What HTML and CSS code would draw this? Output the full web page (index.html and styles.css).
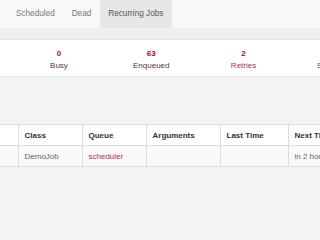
FILE: index.html
```html
<!DOCTYPE html>
<html>
<head>
<meta charset="utf-8">
<link rel="stylesheet" href="styles.css">
</head>
<body>
<nav class="navbar">
  <a class="tab">Scheduled</a>
  <a class="tab">Dead</a>
  <a class="tab active">Recurring Jobs</a>
</nav>
<div class="band"></div>
<section class="summary">
  <div class="stat"><div class="count">0</div><div class="desc">Busy</div></div>
  <div class="stat"><div class="count">63</div><div class="desc">Enqueued</div></div>
  <div class="stat"><div class="count">2</div><div class="desc link">Retries</div></div>
  <div class="stat"><div class="count">0</div><div class="desc">Scheduled</div></div>
</section>
<main class="content">
  <table class="jobs">
    <colgroup>
      <col class="c-name"><col class="c-class"><col class="c-queue"><col class="c-args"><col class="c-last"><col class="c-next">
    </colgroup>
    <thead>
      <tr><th></th><th>Class</th><th>Queue</th><th>Arguments</th><th>Last Time</th><th>Next Time</th></tr>
    </thead>
    <tbody>
      <tr><td></td><td>DemoJob</td><td><a class="queue">scheduler</a></td><td></td><td></td><td>in 2 hours</td></tr>
    </tbody>
  </table>
</main>
</body>
</html>
```
FILE: styles.css
```css
html, body {
  margin: 0;
  padding: 0;
}
body {
  width: 320px;
  height: 214px;
  overflow: hidden;
  background: #f3f3f3;
  font-family: "Liberation Sans", Arial, Helvetica, sans-serif;
  font-size: 8px;
  color: #555;
}
.navbar {
  display: flex;
  height: 28px;
  background: #f8f8f8;
  padding-left: 7.5px;
}
.tab {
  display: block;
  padding: 0 8.5px;
  line-height: 28px;
  font-size: 8.2px;
  color: #777;
  white-space: nowrap;
}
.tab.active {
  background: #e7e7e7;
  color: #555;
}
.band {
  height: 11px;
  background: #efefef;
  border-bottom: 1px solid #e4e4e4;
}
.summary {
  display: flex;
  height: 37px;
  box-sizing: border-box;
  padding: 7.5px 0 0 12.8px;
  background: #fff;
  border-bottom: 1px solid #e6e6e6;
  white-space: nowrap;
}
.stat {
  flex: 0 0 92.3px;
  text-align: center;
}
.count {
  line-height: 12px;
  font-weight: bold;
  color: #b1003e;
}
.desc {
  line-height: 12px;
  color: #5a3344;
}
.desc.link {
  color: #b42a5a;
}
.content {
  margin-top: 47px;
}
.jobs {
  border-collapse: collapse;
  table-layout: fixed;
  width: 400px;
  margin-left: -1px;
  background: #fff;
}
.c-name { width: 19px; }
.c-class { width: 64px; }
.c-queue { width: 64px; }
.c-args { width: 74px; }
.c-last { width: 68px; }
.c-next { width: 111px; }
.jobs th, .jobs td {
  border: 1px solid #ddd;
  height: 21px;
  padding: 0 5.5px;
  text-align: left;
  white-space: nowrap;
  overflow: hidden;
  box-sizing: border-box;
}
.jobs th {
  font-weight: bold;
  color: #333;
}
.jobs tbody tr {
  background: #f9f9f9;
}
.jobs td {
  color: #666;
}
.queue {
  color: #c2285c;
}
```
